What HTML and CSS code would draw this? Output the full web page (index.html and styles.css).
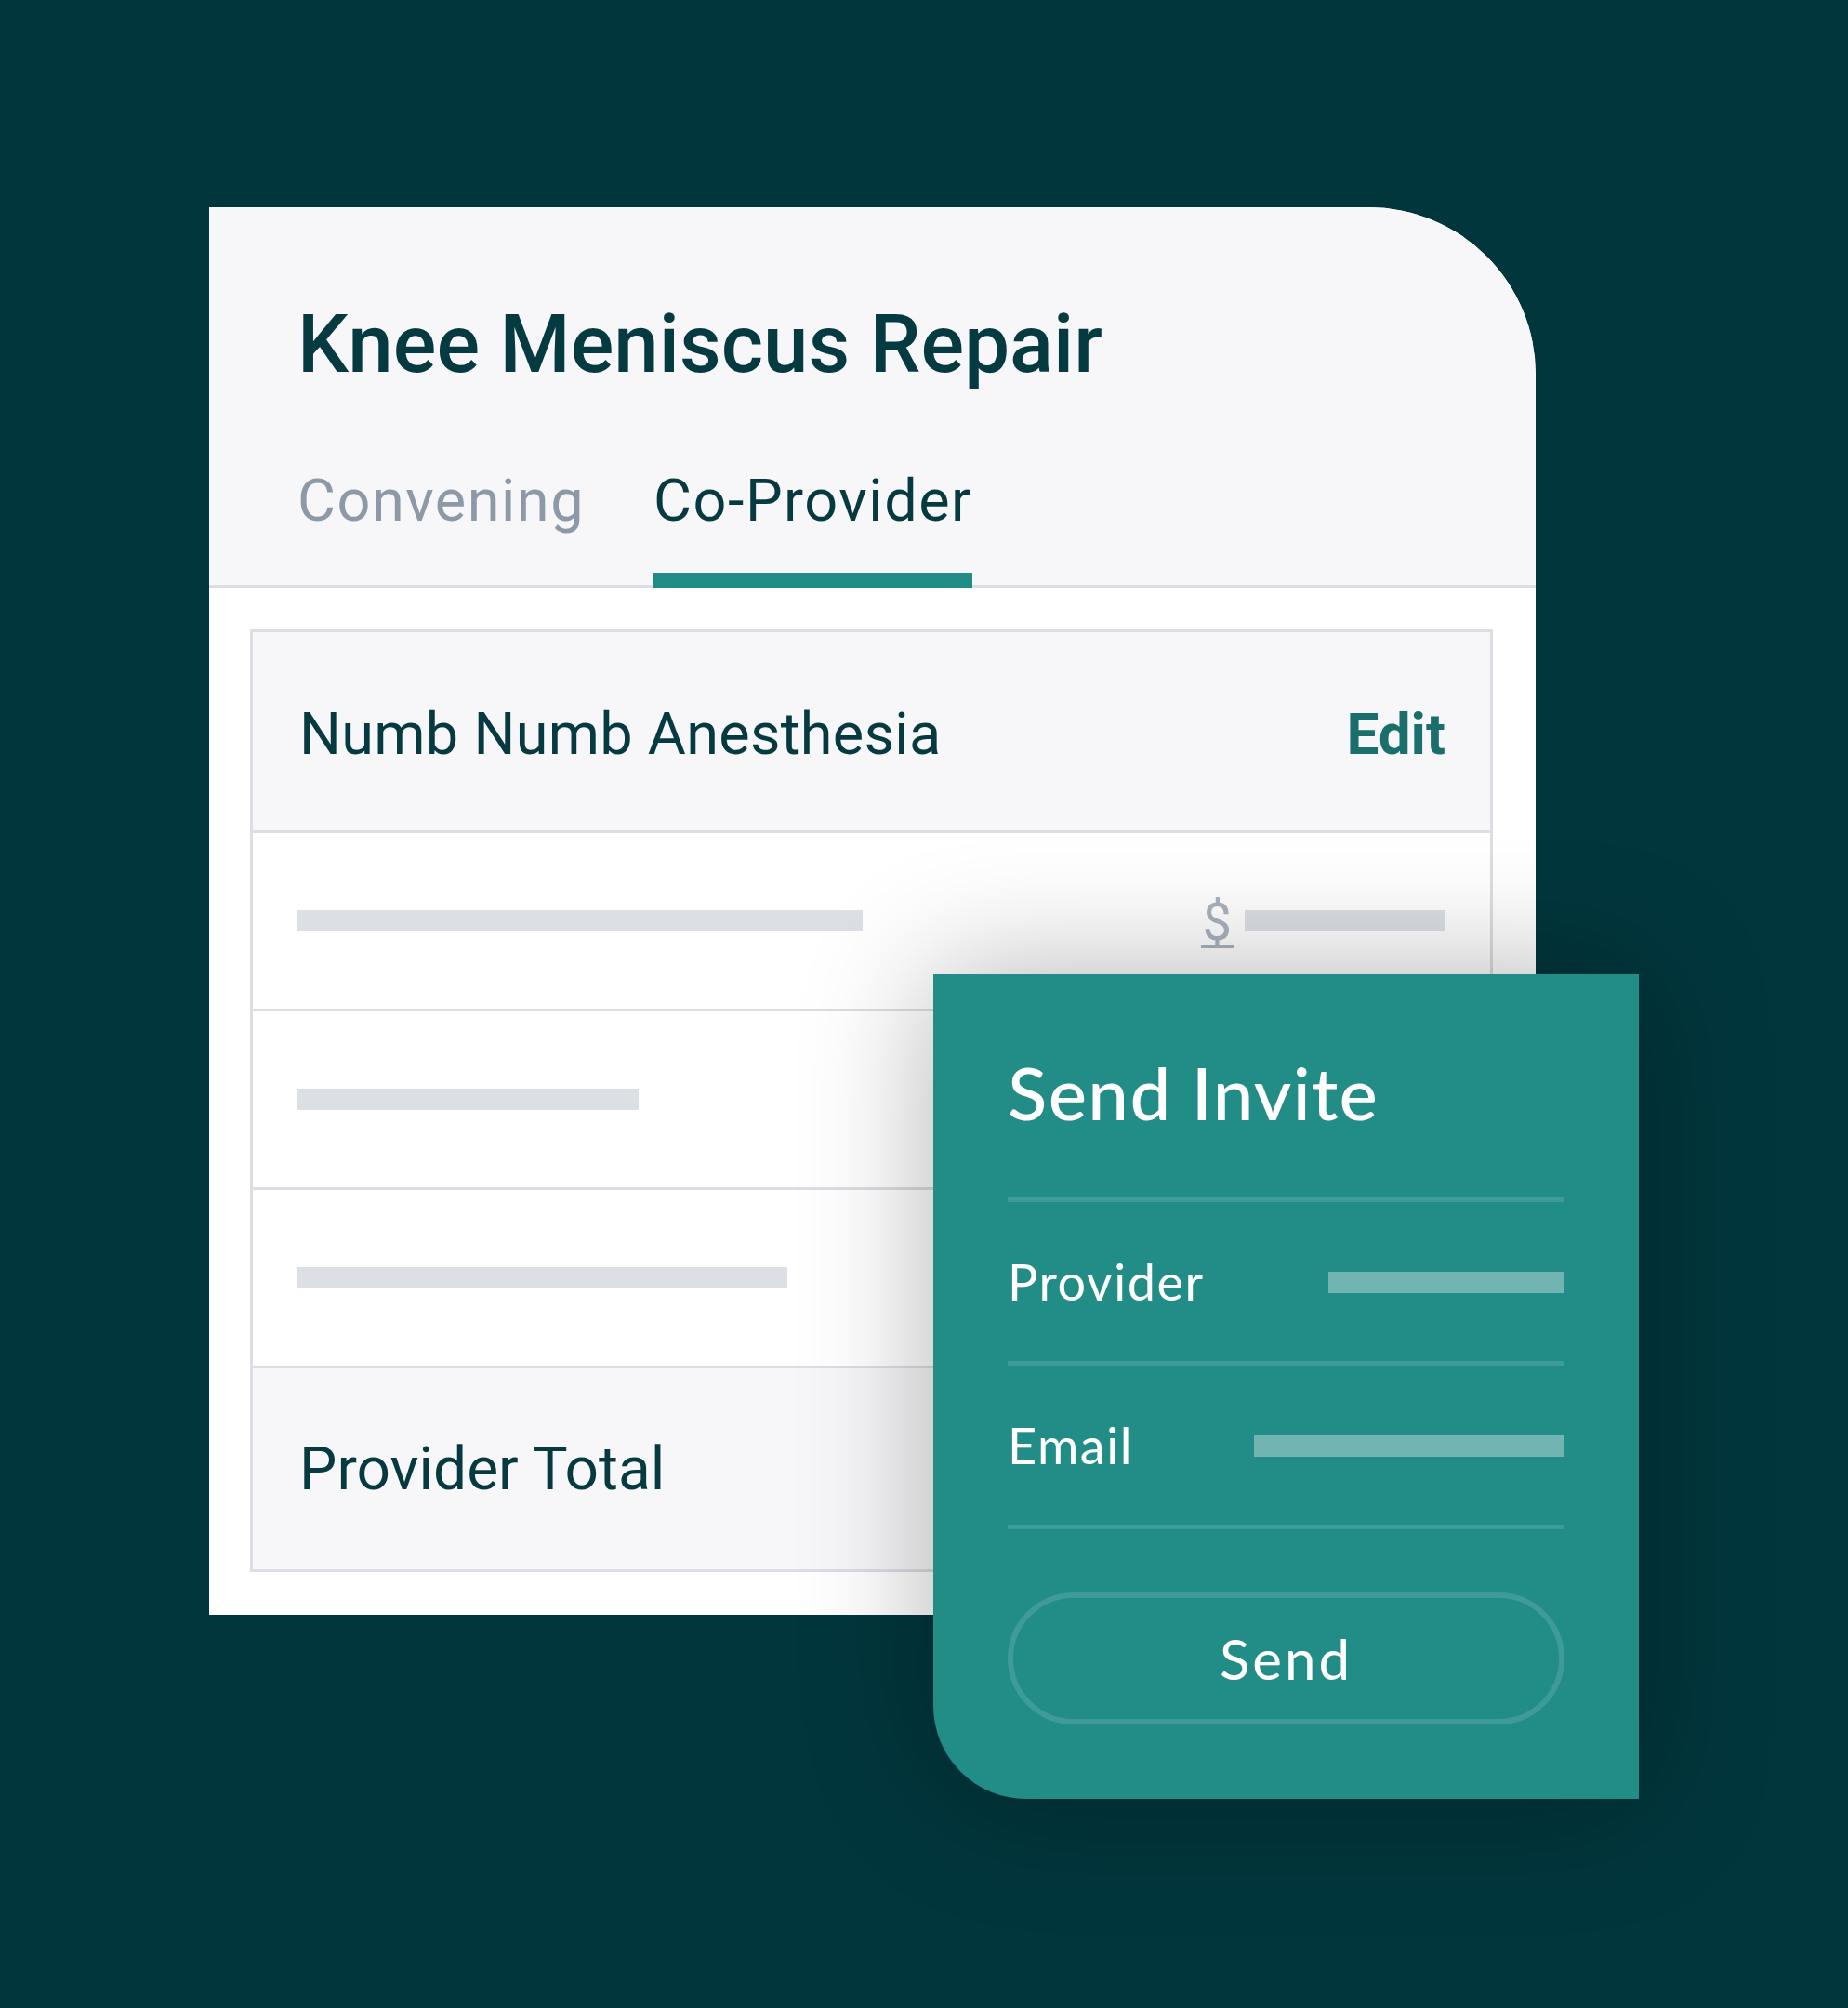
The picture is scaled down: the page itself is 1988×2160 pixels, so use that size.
FILE: index.html
```html
<!DOCTYPE html>
<html lang="en">
<head>
    <meta charset="UTF-8">
    <title>Knee Meniscus Repair</title>
    <link rel="stylesheet" href="styles.css">
</head>
<body>
    <div class="stage">
        <div class="card">
            <div class="card-head">
                <h1 class="title">Knee Meniscus Repair</h1>
                <div class="tabs">
                    <span class="tab">Convening</span>
                    <span class="tab active">Co-Provider</span>
                </div>
            </div>

            <div class="table">
                <div class="row row-head">
                    <span class="name">Numb Numb Anesthesia</span>
                    <span class="edit">Edit</span>
                </div>
                <div class="row">
                    <span class="bar bar-long"></span>
                    <span class="price">
                        <span class="dollar">$</span>
                        <span class="bar bar-price"></span>
                    </span>
                </div>
                <div class="row">
                    <span class="bar bar-short"></span>
                </div>
                <div class="row">
                    <span class="bar bar-mid"></span>
                </div>
                <div class="row row-foot">
                    <span class="name">Provider Total</span>
                </div>
            </div>
        </div>

        <!-- invite popup sits over the card -->
        <div class="invite">
            <h2 class="invite-title">Send Invite</h2>
            <div class="field">
                <span class="field-label">Provider</span>
                <span class="field-bar field-bar-provider"></span>
            </div>
            <div class="field">
                <span class="field-label">Email</span>
                <span class="field-bar field-bar-email"></span>
            </div>
            <button class="send-btn">Send</button>
        </div>
    </div>
</body>
</html>
```

FILE: styles.css
```css
body {
    margin: 0;
    background-color: #02363d;
    font-family: Roboto, "Liberation Sans", sans-serif;
    color: #063a40;
}

.stage {
    position: relative;
    width: 1988px;
    height: 2160px;
    padding: 223px 0 0 225px;
    box-sizing: border-box;
}

.card {
    width: 1427px;
    background-color: #ffffff;
    border-top-right-radius: 180px;
    padding-bottom: 46px;
}

.card-head {
    background-color: #f7f7f9;
    border-top-right-radius: 180px;
    border-bottom: 3px solid #dcdee3;
    padding: 104px 0 0 95px;
}

.title {
    margin: 0;
    font-size: 87px;
    font-weight: 500;
    line-height: 1;
    color: #053a40;
}

.tabs {
    display: flex;
    gap: 74px;
    margin-top: 93px;
    margin-bottom: -3px;
}

.tab {
    font-size: 63px;
    letter-spacing: 1.5px;
    line-height: 1;
    color: #8e99a8;
    padding-bottom: 46px;
    border-bottom: 16px solid transparent;
}

.tab.active {
    color: #063a40;
    border-bottom-color: #228c87;
}

.table {
    margin: 45px 46px 0 44px;
    border: 3px solid #dcdee3;
}

.row {
    display: flex;
    align-items: center;
    justify-content: space-between;
    height: 189px;
    padding: 0 48px 0 48px;
    border-bottom: 3px solid #dcdee3;
    background-color: #ffffff;
}

.row-head {
    height: 207px;
    padding-top: 6px;
    padding-left: 50px;
    background-color: #f7f7f9;
}

.row-foot {
    height: 214px;
    padding-top: 2px;
    padding-left: 50px;
    background-color: #f7f7f9;
    border-bottom: none;
}

.name {
    font-size: 63px;
    letter-spacing: 0.3px;
    line-height: 1;
}

.row-foot .name {
    font-size: 64px;
    letter-spacing: 0;
}

.edit {
    font-size: 62px;
    line-height: 1;
    font-weight: 700;
    color: #1a6f6c;
}

.bar {
    display: block;
    height: 23px;
    background-color: #dcdfe4;
}

.bar-long { width: 608px; }
.bar-short { width: 367px; }
.bar-mid { width: 527px; }
.bar-price { width: 216px; }

.price {
    display: flex;
    align-items: center;
}

.dollar {
    font-size: 56px;
    line-height: 50px;
    color: #aab3bf;
    border-bottom: 3px solid #aab3bf;
    margin: 6px 12px 0 0;
    padding: 0 2px;
}

.invite {
    position: absolute;
    left: 1004px;
    top: 1048px;
    width: 759px;
    height: 887px;
    box-sizing: border-box;
    padding: 88px 80px 0 80px;
    background-color: #228c87;
    border-bottom-left-radius: 100px;
    box-shadow: 0 0 140px rgba(0, 0, 0, 0.3);
    font-family: Lato, "Open Sans", sans-serif;
    color: #ffffff;
}

.invite-title {
    margin: 0 0 74px;
    font-size: 78px;
    font-weight: 500;
    letter-spacing: 1.4px;
    line-height: 1;
}

.field {
    display: flex;
    align-items: center;
    justify-content: space-between;
    padding: 59px 0 58px;
    border-top: 5px solid #3e9b97;
}

.field:last-of-type {
    border-bottom: 5px solid #3e9b97;
}

.field-label {
    font-size: 54px;
    letter-spacing: 1.5px;
    line-height: 54px;
}

.field-bar {
    height: 23px;
    background-color: #72b4b1;
}

.field-bar-provider { width: 254px; }
.field-bar-email { width: 334px; }

.send-btn {
    display: flex;
    align-items: center;
    justify-content: center;
    width: 100%;
    height: 142px;
    margin-top: 68px;
    background: transparent;
    border: 6px solid #3e9b97;
    border-radius: 71px;
    font-family: Lato, "Open Sans", sans-serif;
    font-size: 60px;
    letter-spacing: 3px;
    color: #ffffff;
}
```
